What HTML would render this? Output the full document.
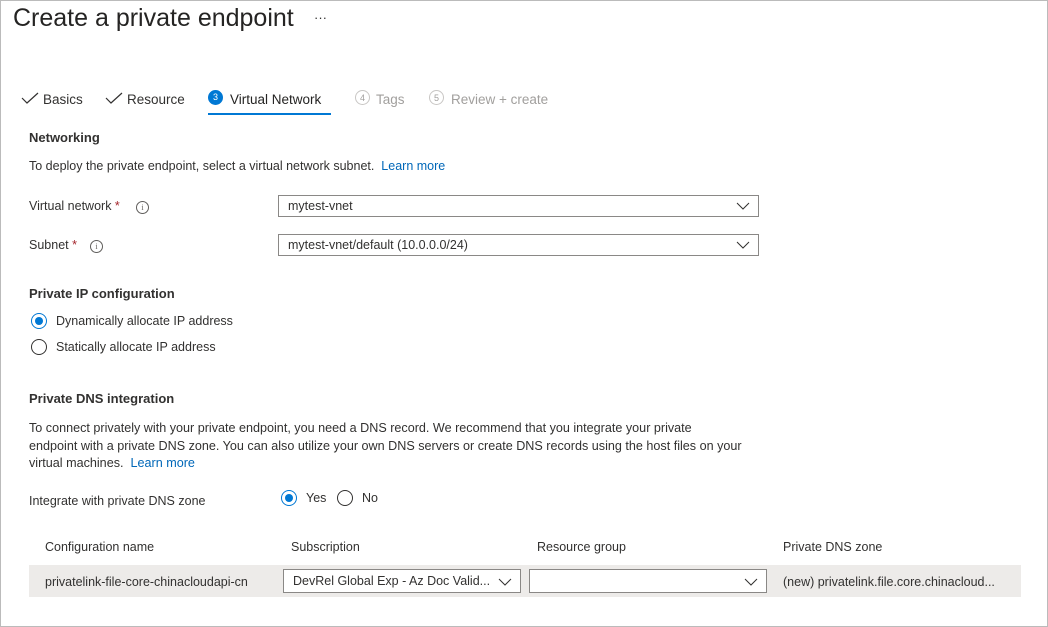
<!DOCTYPE html>
<html><head><style>
body{margin:0;width:1048px;height:627px;background:#fff;font-family:"Liberation Sans",sans-serif;color:#323130;position:relative;overflow:hidden}
.frame{position:absolute;left:0;top:0;width:1046px;height:625px;border:1px solid #bbb}
.a{position:absolute;white-space:nowrap;font-size:12.5px}
.b{font-weight:bold;font-size:13px}
.link{color:#0067b8}
.dd{position:absolute;border:1px solid #8a8886;background:#fff;box-sizing:border-box;font-size:12.5px;padding-left:9px;line-height:20px;white-space:nowrap;overflow:hidden}
.dd svg{position:absolute;right:8px;top:6px}
.radio{position:absolute;width:16px;height:16px;border:1px solid #323130;border-radius:50%;box-sizing:border-box}
.radio.on{border-color:#0078d4}
.radio.on::after{content:"";position:absolute;left:3px;top:3px;width:8px;height:8px;border-radius:50%;background:#0078d4}
.info{position:absolute;width:11px;height:11px;border:1px solid #605e5c;border-radius:50%;font-size:8px;text-align:center;line-height:11px;color:#605e5c;font-family:"Liberation Serif",serif}
.step{position:absolute;width:15px;height:15px;border-radius:50%;font-size:9px;text-align:center;line-height:15px;box-sizing:border-box}
.t{font-size:13.5px}
</style></head><body>
<div class="frame"></div>
<div class="a" style="left:13px;top:4px;font-size:25px;color:#252423">Create a private endpoint</div>
<div class="a" style="left:314px;top:10px;font-size:13px">···</div>

<svg style="position:absolute;left:21px;top:92px" width="18" height="12"><path d="M1 6 L6 11 L17 1" stroke="#323130" fill="none" stroke-width="1.2"/></svg>
<div class="a t" style="left:43px;top:92px">Basics</div>
<svg style="position:absolute;left:105px;top:92px" width="18" height="12"><path d="M1 6 L6 11 L17 1" stroke="#323130" fill="none" stroke-width="1.2"/></svg>
<div class="a t" style="left:127px;top:92px">Resource</div>
<div class="step" style="left:208px;top:90px;background:#0078d4;color:#fff">3</div>
<div class="a t" style="left:230px;top:92px;color:#252423">Virtual Network</div>
<div style="position:absolute;left:208px;top:113px;width:123px;height:2px;background:#0078d4"></div>
<div class="step" style="left:355px;top:90px;border:1px solid #c8c6c4;color:#a19f9d">4</div>
<div class="a t" style="left:376px;top:92px;color:#a19f9d">Tags</div>
<div class="step" style="left:429px;top:90px;border:1px solid #c8c6c4;color:#a19f9d">5</div>
<div class="a t" style="left:451px;top:92px;color:#a19f9d">Review + create</div>

<div class="a b" style="left:29px;top:130px">Networking</div>
<div class="a" style="left:29px;top:159px">To deploy the private endpoint, select a virtual network subnet. <span class="link">&nbsp;Learn more</span></div>
<div class="a" style="left:29px;top:199px">Virtual network <span style="color:#a4262c">*</span></div>
<div class="info" style="left:136px;top:201px">i</div>
<div class="dd" style="left:278px;top:195px;width:481px;height:22px">mytest-vnet<svg width="14" height="8"><path d="M1 1 L7 7 L13 1" stroke="#323130" fill="none"/></svg></div>
<div class="a" style="left:29px;top:238px">Subnet <span style="color:#a4262c">*</span></div>
<div class="info" style="left:90px;top:240px">i</div>
<div class="dd" style="left:278px;top:234px;width:481px;height:22px">mytest-vnet/default (10.0.0.0/24)<svg width="14" height="8"><path d="M1 1 L7 7 L13 1" stroke="#323130" fill="none"/></svg></div>

<div class="a b" style="left:29px;top:286px">Private IP configuration</div>
<div class="radio on" style="left:31px;top:313px"></div>
<div class="a" style="left:56px;top:314px">Dynamically allocate IP address</div>
<div class="radio" style="left:31px;top:339px"></div>
<div class="a" style="left:56px;top:340px">Statically allocate IP address</div>

<div class="a b" style="left:29px;top:391px">Private DNS integration</div>
<div class="a" style="left:29px;top:420px;line-height:17.5px;font-size:12.6px">To connect privately with your private endpoint, you need a DNS record. We recommend that you integrate your private<br>endpoint with a private DNS zone. You can also utilize your own DNS servers or create DNS records using the host files on your<br>virtual machines. <span class="link">&nbsp;Learn more</span></div>
<div class="a" style="left:29px;top:494px">Integrate with private DNS zone</div>
<div class="radio on" style="left:281px;top:490px"></div>
<div class="a" style="left:306px;top:491px">Yes</div>
<div class="radio" style="left:337px;top:490px"></div>
<div class="a" style="left:362px;top:491px">No</div>

<div class="a" style="left:45px;top:540px">Configuration name</div>
<div class="a" style="left:291px;top:540px">Subscription</div>
<div class="a" style="left:537px;top:540px">Resource group</div>
<div class="a" style="left:783px;top:540px">Private DNS zone</div>
<div style="position:absolute;left:29px;top:565px;width:992px;height:32px;background:#edebe9"></div>
<div class="a" style="left:45px;top:575px">privatelink-file-core-chinacloudapi-cn</div>
<div class="dd" style="left:283px;top:569px;width:238px;height:24px;line-height:22px">DevRel Global Exp - Az Doc Valid...<svg width="14" height="8" style="top:8px"><path d="M1 1 L7 7 L13 1" stroke="#323130" fill="none"/></svg></div>
<div class="dd" style="left:529px;top:569px;width:238px;height:24px"><svg width="14" height="8" style="top:8px"><path d="M1 1 L7 7 L13 1" stroke="#323130" fill="none"/></svg></div>
<div class="a" style="left:783px;top:575px">(new) privatelink.file.core.chinacloud...</div>
</body></html>
